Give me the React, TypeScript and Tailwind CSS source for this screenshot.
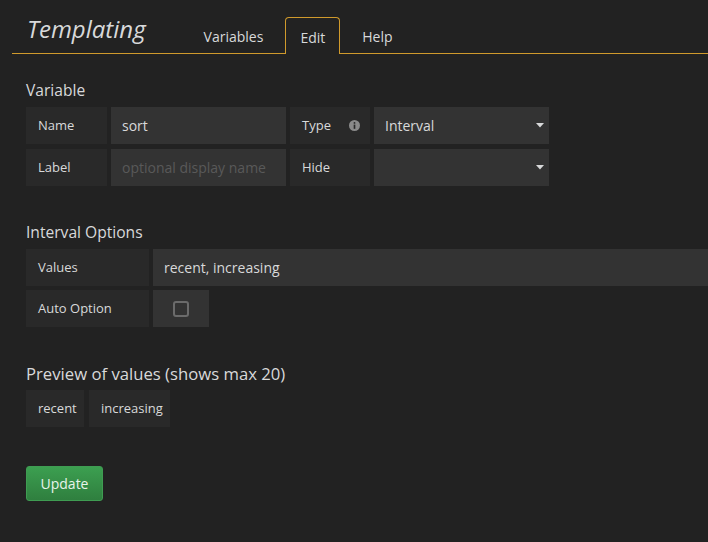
import { useState } from 'react'

const font = { fontFamily: '"Open Sans", "Noto Sans", sans-serif' }

const label =
  'flex items-center h-[37px] px-3 bg-[#292929] text-[13px] text-[#d8d9da] shrink-0'
const input = 'flex items-center h-[37px] px-[11px] bg-[#333333] text-[14px] shrink-0'
const heading = 'leading-[22px] text-[#d8d9da]'

function Caret() {
  return (
    <svg width="8" height="5" viewBox="0 0 8 5" className="ml-auto -mr-[6px]">
      <path d="M0 0h8L4 4.5z" fill="#d8d9da" />
    </svg>
  )
}

function InfoIcon() {
  return (
    <svg width="11" height="11" viewBox="0 0 12 12" className="ml-auto">
      <circle cx="6" cy="6" r="6" fill="#8a8a8a" />
      <rect x="5.1" y="5" width="1.8" height="4.6" fill="#292929" />
      <circle cx="6" cy="3.2" r="1" fill="#292929" />
    </svg>
  )
}

export default function App() {
  const [tab] = useState('Edit')
  const tabs = ['Variables', 'Edit', 'Help']

  return (
    <div className="min-h-screen bg-[#222222] overflow-hidden" style={font}>
      <div className="ml-3 flex items-end h-[54px] border-b border-[#d09a2c]">
        <h1 className="pl-[15px] pb-[12px] text-[24px] italic font-normal text-[#d8d9da] leading-none">
          Templating
        </h1>
        <ul className="flex ml-[36px] -mb-px">
          {tabs.map((t) =>
            t === tab ? (
              <li
                key={t}
                className="h-[37px] px-[14px] pt-[2px] flex items-center text-[14px] text-[#d8d9da] bg-[#222222] border border-b-0 border-[#d09a2c] rounded-t-[4px]"
              >
                {t}
              </li>
            ) : (
              <li
                key={t}
                className="h-[37px] px-[22px] pt-[2px] flex items-center text-[14px] text-[#d8d9da]"
              >
                {t}
              </li>
            ),
          )}
        </ul>
      </div>

      <div className="pl-[26px]">
        <section className="mt-[25px]">
          <h2 className={`${heading} text-[15.6px]`}>Variable</h2>
          <div className="mt-[6px] flex flex-col gap-[5px]">
            <div className="flex gap-[4px]">
              <div className={`${label} w-[81px]`}>Name</div>
              <div className={`${input} w-[175px] text-[#d8d9da]`}>sort</div>
              <div className={`${label} w-[80px] pr-[10px]`}>
                Type
                <InfoIcon />
              </div>
              <div className={`${input} w-[175px] text-[#d8d9da]`}>
                Interval
                <Caret />
              </div>
            </div>
            <div className="flex gap-[4px]">
              <div className={`${label} w-[81px]`}>Label</div>
              <div className={`${input} w-[175px] text-[#595959]`}>optional display name</div>
              <div className={`${label} w-[80px]`}>Hide</div>
              <div className={`${input} w-[175px]`}>
                <Caret />
              </div>
            </div>
          </div>
        </section>

        <section className="mt-[35px]">
          <h2 className={`${heading} text-[15.6px]`}>Interval Options</h2>
          <div className="mt-[6px] flex flex-col gap-[4px]">
            <div className="flex gap-[4px]">
              <div className={`${label} w-[123px]`}>Values</div>
              <div className={`${input} flex-1 text-[#d8d9da]`}>recent, increasing</div>
            </div>
            <div className="flex gap-[4px]">
              <div className={`${label} w-[123px]`}>Auto Option</div>
              <div className={`${input} w-[56px] justify-center`}>
                <span className="block w-4 h-4 rounded-[3px] border-2 border-[#6b6b6b]" />
              </div>
            </div>
          </div>
        </section>

        <section className="mt-[36px]">
          <h2 className={`${heading} text-[16.7px]`}>Preview of values (shows max 20)</h2>
          <div className="mt-[5px] flex gap-[5px]">
            <div className={`${label} w-[58px]`}>recent</div>
            <div className={`${label} w-[81px]`}>increasing</div>
          </div>
        </section>

        <button
          type="button"
          className="mt-[39px] w-[77px] h-[35px] rounded-[3px] border border-[#3f9c52] bg-gradient-to-b from-[#3c9f50] to-[#2f7f3f] text-[14px] text-[#e8f4ea]"
        >
          Update
        </button>
      </div>
    </div>
  )
}
